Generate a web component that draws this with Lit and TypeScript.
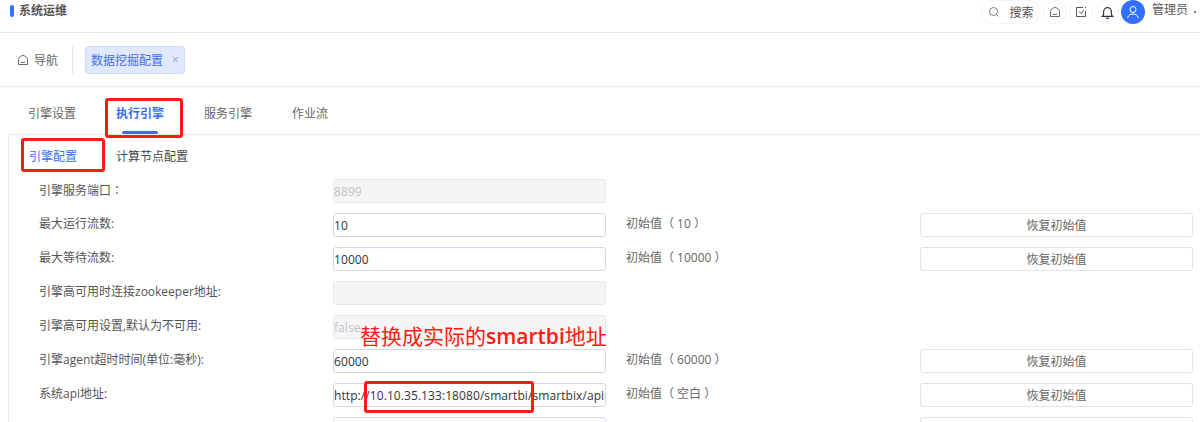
import { LitElement, html, css, TemplateResult } from "lit";
import { customElement } from "lit/decorators.js";

interface Row {
  label: string | TemplateResult;
  value: string;
  disabled?: boolean;
  init?: string;
}

const ROWS: Row[] = [
  { label: html`引擎服务端口<span class="tc">：</span>`, value: "8899", disabled: true },
  { label: "最大运行流数:", value: "10", init: "10" },
  { label: "最大等待流数:", value: "10000", init: "10000" },
  { label: "引擎高可用时连接zookeeper地址:", value: "", disabled: true },
  { label: "引擎高可用设置,默认为不可用:", value: "false", disabled: true },
  { label: "引擎agent超时时间(单位:毫秒):", value: "60000", init: "60000" },
  { label: "系统api地址:", value: "http://10.10.35.133:18080/smartbi/smartbix/api", init: "空白" },
  { label: "", value: "", init: "" },
];

@customElement("app-root")
export class AppRoot extends LitElement {
  static styles = css`
    :host {
      display: block;
      width: 1200px;
      height: 422px;
      overflow: hidden;
      position: relative;
      background: #fff;
      font-family: "Open Sans", "Noto Sans CJK SC", sans-serif;
      font-size: 12px;
      color: #555;
    }
    .tc {
      font-family: "Noto Sans CJK TC", sans-serif;
    }
    .top {
      height: 32px;
      border-bottom: 1px solid #e8eaf0;
      display: flex;
      align-items: flex-start;
    }
    .brand {
      display: flex;
      align-items: center;
      gap: 5px;
      padding: 5px 0 0 10px;
      font-weight: 700;
      color: #555;
      line-height: 12px;
    }
    .brand i {
      width: 4px;
      height: 12px;
      background: #3370ff;
      border-radius: 2px;
    }
    .right {
      margin-left: auto;
      display: flex;
      align-items: flex-start;
      gap: 2px;
      width: 219px;
      overflow: hidden;
    }
    .pill {
      height: 24px;
      min-width: 24px;
      box-sizing: border-box;
      border: 1px solid #f3f4f7;
      border-radius: 13px;
      display: flex;
      align-items: center;
      justify-content: center;
      gap: 9px;
      color: #555;
      flex: none;
    }
    .pill.search {
      width: 60px;
    }
    .avatar {
      width: 24px;
      height: 24px;
      border-radius: 50%;
      background: #3370ff;
      display: flex;
      align-items: center;
      justify-content: center;
      flex: none;
    }
    .user {
      flex: none;
      padding: 4px 0 0 5px;
      line-height: 12px;
      color: #555;
    }
    .dot {
      flex: none;
      width: 2px;
      height: 2px;
      margin: 11px 0 0 4px;
      background: #555;
      border-radius: 50%;
    }
    .nav {
      height: 53px;
      border-bottom: 1px solid #e8eaf0;
      display: flex;
      align-items: center;
      padding-left: 17px;
    }
    .home {
      display: flex;
      align-items: center;
      gap: 5px;
      color: #666;
    }
    .sep {
      width: 1px;
      height: 28px;
      background: #e0e3ec;
      margin: 0 12px 0 14px;
    }
    .tag {
      height: 28px;
      width: 100px;
      box-sizing: border-box;
      background: #e0e8fd;
      border: 1px solid #ccd8f8;
      border-radius: 4px;
      color: #3f6fe8;
      display: flex;
      align-items: center;
      padding-left: 5px;
      gap: 9px;
    }
    .tag span {
      color: #9aa3bd;
      font-size: 12px;
      line-height: 12px;
    }
    .tabs {
      height: 47px;
      display: flex;
      padding-left: 28px;
      gap: 40px;
    }
    .tab {
      position: relative;
      padding-top: 21px;
      line-height: 12px;
      color: #666;
    }
    .tab.on {
      color: #3370ff;
      font-weight: 700;
    }
    .tab.on::after {
      content: "";
      position: absolute;
      left: 6px;
      right: 6px;
      bottom: 0;
      height: 3px;
      border-radius: 2px;
      background: #3370ff;
    }
    .panel {
      margin-left: 8px;
      border-left: 1px solid #e8eaf0;
      border-top: 1px solid #e8eaf0;
      height: 300px;
    }
    .subs {
      height: 44px;
      display: flex;
      padding: 16px 0 0 20px;
      gap: 39px;
      box-sizing: border-box;
      line-height: 12px;
      color: #444;
    }
    .subs .on {
      color: #3370ff;
    }
    .row {
      height: 24px;
      margin-bottom: 10px;
      display: flex;
      align-items: flex-start;
    }
    .label {
      width: 324px;
      flex: none;
      box-sizing: border-box;
      padding: 5px 0 0 30px;
      line-height: 12px;
      color: #555;
    }
    .input {
      width: 273px;
      height: 24px;
      box-sizing: border-box;
      flex: none;
      border: 1px solid #d4d7e6;
      border-radius: 3px;
      line-height: 23px;
      letter-spacing: 0.08px;
      color: #333;
      white-space: nowrap;
      overflow: hidden;
    }
    .input.off {
      background: #f5f5f6;
      border-color: #e8e9ef;
      color: #c0c2c8;
    }
    .init {
      width: 314px;
      flex: none;
      box-sizing: border-box;
      padding: 5px 0 0 20px;
      line-height: 12px;
      white-space: pre;
      color: #666;
    }
    .restore {
      width: 273px;
      height: 24px;
      box-sizing: border-box;
      flex: none;
      border: 1px solid #e3e3e6;
      border-radius: 3px;
      text-align: center;
      line-height: 23px;
      color: #666;
    }
    .mark {
      position: absolute;
      box-sizing: border-box;
      border: 3px solid #ff1a12;
      border-radius: 3px;
      pointer-events: none;
    }
    .m-tab {
      left: 105px;
      top: 98px;
      width: 78px;
      height: 40px;
    }
    .m-sub {
      left: 21px;
      top: 138px;
      width: 84px;
      height: 34px;
    }
    .m-url {
      left: 364px;
      top: 381px;
      width: 170px;
      height: 32px;
    }
    .note {
      position: absolute;
      left: 360px;
      top: 324px;
      font-size: 21px;
      line-height: 24px;
      color: #ff1a12;
      white-space: nowrap;
    }
    .note b {
      font-weight: 600;
    }
  `;

  private homeIcon() {
    return html`<svg width="12" height="12" viewBox="0 0 12 12" fill="none" stroke="#667" stroke-width="1">
      <path d="M1.5 5.5C1.5 3.500 4 1.500 6 1.500S10.500 3.500 10.500 5.500v5h-9z" /><path d="M4 8.500h4" />
    </svg>`;
  }

  render() {
    return html`
      <div class="top">
        <div class="brand"><i></i>系统运维</div>
        <div class="right">
          <div class="pill search">
            <svg width="12" height="12" viewBox="0 0 12 12" fill="none" stroke="#778" stroke-width="1">
              <circle cx="5.500" cy="5.500" r="4" /><path d="m8.500 8.500 2 2" />
            </svg>
            <span>搜索</span>
          </div>
          <div class="pill">${this.homeIcon()}</div>
          <div class="pill">
            <svg width="12" height="12" viewBox="0 0 12 12" fill="none" stroke="#556" stroke-width="1">
              <path d="M10.500 5v5.500h-9v-9H8" /><path d="m4 5.500 2 2 3-3.500" /><path d="M10 1.500h1" />
            </svg>
          </div>
          <div class="pill">
            <svg width="13" height="13" viewBox="0 0 12 12" fill="none" stroke="#334" stroke-width="1.100">
              <path d="M1.500 9.500c1-.8 1-2.500 1-4.500a3.500 3.500 0 0 1 7 0c0 2 0 3.700 1 4.500z" /><path d="M4.500 11.300h3" />
            </svg>
          </div>
          <div class="avatar">
            <svg width="14" height="14" viewBox="0 0 14 14" fill="none" stroke="#fff" stroke-width="1">
              <circle cx="7" cy="4.500" r="3" /><path d="M1.500 13c1-3 3-4 5.500-4s4.500 1 5.500 4" />
            </svg>
          </div>
          <div class="user">管理员</div>
          <div class="dot"></div>
        </div>
      </div>
      <div class="nav">
        <div class="home">${this.homeIcon()}<span>导航</span></div>
        <div class="sep"></div>
        <div class="tag">数据挖掘配置<span>×</span></div>
      </div>
      <div class="tabs">
        <div class="tab">引擎设置</div>
        <div class="tab on">执行引擎</div>
        <div class="tab">服务引擎</div>
        <div class="tab">作业流</div>
      </div>
      <div class="panel">
        <div class="subs">
          <div class="on">引擎配置</div>
          <div>计算节点配置</div>
        </div>
        ${ROWS.map(
          (r) => html`<div class="row">
            <div class="label">${r.label}</div>
            <div class="input ${r.disabled ? "off" : ""}">${r.value}</div>
            ${r.init !== undefined
              ? html`<div class="init">${r.init ? `初始值（ ${r.init} ）` : ""}</div>
                  <div class="restore">${r.label ? "恢复初始值" : ""}</div>`
              : ""}
          </div>`
        )}
      </div>
      <div class="mark m-tab"></div>
      <div class="mark m-sub"></div>
      <div class="mark m-url"></div>
      <div class="note">替换成实际的<b>smartbi</b>地址</div>
    `;
  }
}
